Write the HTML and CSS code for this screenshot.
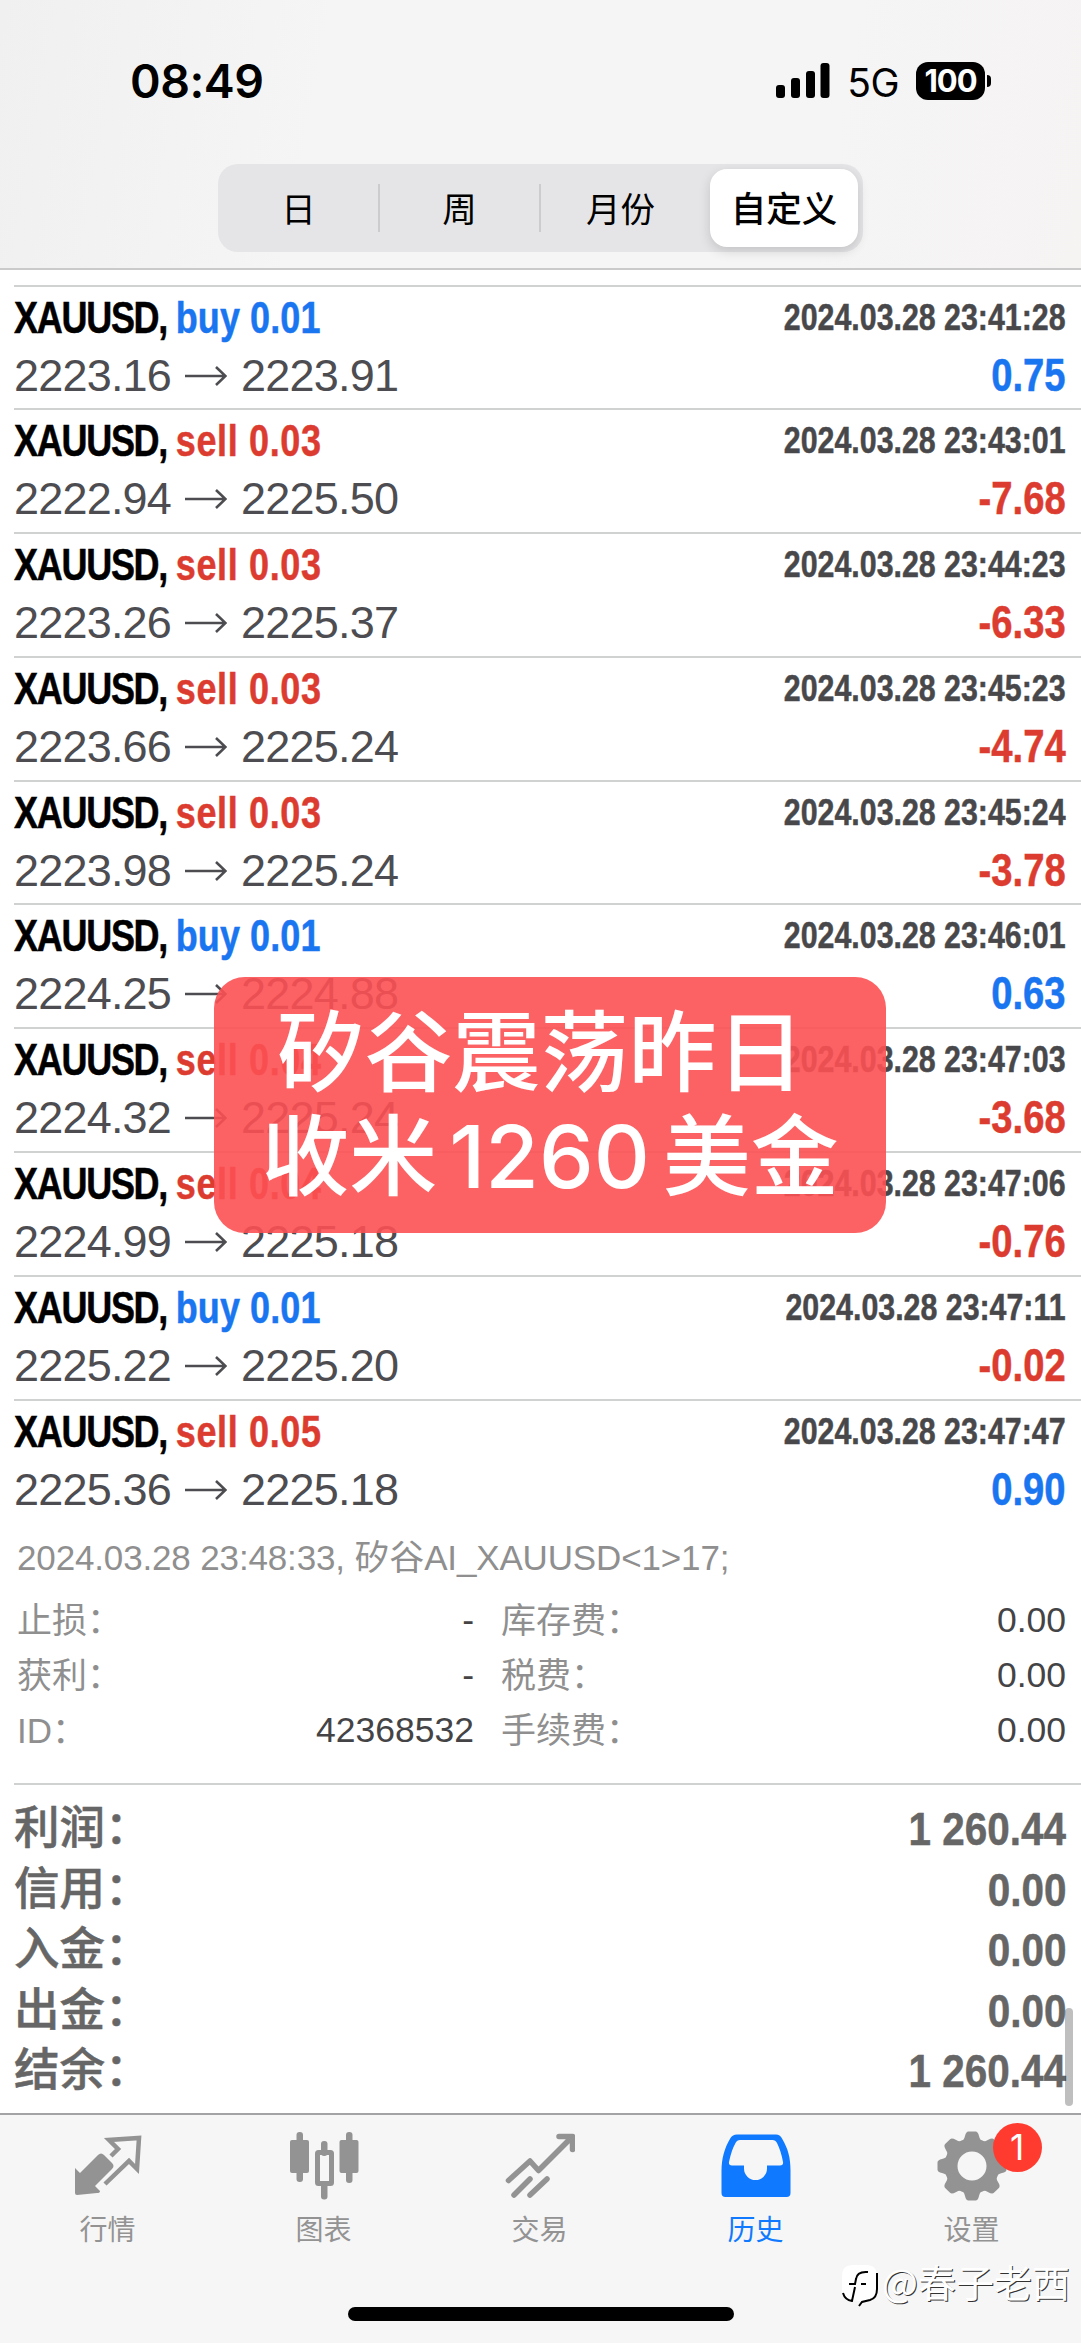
FILE: index.html
```html
<!DOCTYPE html>
<html lang="zh-CN">
  <head>
    <meta charset="utf-8">
    <title>历史</title>
    <link rel="stylesheet" href="styles.css">
  </head>
  <body>
    <div class="screen">
      <header class="header">
        <div class="status">
          <span class="time">08:49</span>
          <div class="status-right">
            <svg class="signal" width="54" height="35" viewBox="0 0 54 35">
              <rect x="0" y="22" width="9" height="13" rx="3"/>
              <rect x="15" y="15" width="9" height="20" rx="3"/>
              <rect x="30" y="8" width="9" height="27" rx="3"/>
              <rect x="44.5" y="0" width="9" height="35" rx="3"/>
            </svg>
            <span class="network">5G</span>
            <span class="battery">100</span>
            <span class="battery-tip"></span>
          </div>
        </div>
        <div class="segments">
          <span class="segment">日</span>
          <span class="segment line">周</span>
          <span class="segment line">月份</span>
          <span class="segment active">自定义</span>
        </div>
      </header>

      <main class="content">
        <div class="deals" id="deals"></div>

        <div class="details">
          <div class="comment">2024.03.28 23:48:33, 矽谷AI_XAUUSD&lt;1&gt;17;</div>
          <div class="detail-grid">
            <span>止损：</span><b>-</b><span>库存费：</span><b>0.00</b>
            <span>获利：</span><b>-</b><span>税费：</span><b>0.00</b>
            <span>ID：</span><b>42368532</b><span>手续费：</span><b>0.00</b>
          </div>
        </div>

        <div class="totals">
          <div class="total"><span>利润：</span><b>1 260.44</b></div>
          <div class="total"><span>信用：</span><b>0.00</b></div>
          <div class="total"><span>入金：</span><b>0.00</b></div>
          <div class="total"><span>出金：</span><b>0.00</b></div>
          <div class="total"><span>结余：</span><b>1 260.44</b></div>
        </div>
        <div class="scrollbar"></div>
      </main>

      <nav class="tabbar">
        <div class="tab">
          <svg width="70" height="70" viewBox="0 0 70 70">
            <path d="M2 37l5 5 18-18q3-3 6 0l8 8q3 3 0 6l-17 17 5 5q0 2-3 2L4 64q-2 0-2-2z" fill="currentColor"/>
            <path d="M38 25l7-7-9-9 30-2-2 31-8-8-24 23" fill="none" stroke="currentColor" stroke-width="4.5"/>
          </svg>
          <span>行情</span>
        </div>
        <div class="tab">
          <svg width="70" height="70" viewBox="0 0 70 70">
            <g fill="currentColor">
              <rect x="1" y="9" width="19" height="33" rx="2"/><rect x="7.5" y="1" width="6.5" height="50" rx="3"/>
              <rect x="50.5" y="9" width="19" height="33" rx="2"/><rect x="57" y="1" width="6.5" height="51" rx="3"/>
              <rect x="32" y="10" width="6.5" height="15" rx="3"/><rect x="32" y="50" width="6.5" height="18.5" rx="3"/>
            </g>
            <rect x="28.5" y="21.5" width="14" height="31" rx="1" fill="none" stroke="currentColor" stroke-width="5"/>
          </svg>
          <span>图表</span>
        </div>
        <div class="tab">
          <svg width="70" height="70" viewBox="0 0 70 70" fill="none" stroke="currentColor" stroke-width="5.5" stroke-linecap="round" stroke-linejoin="round">
            <path d="M3.5 49.5L25 30l8.500 9.500L67 6M54 5.500h13.500v13"/>
            <path d="M9 64l16-16M25 64l17-16"/>
          </svg>
          <span>交易</span>
        </div>
        <div class="tab current">
          <svg width="70" height="70" viewBox="0 0 70 70">
            <path fill-rule="evenodd" fill="currentColor" d="M16 3.500h39q4 0 6 4c6 10 8.500 19 8.500 32V62q0 4-4 4h-61q-4 0-4-4V40c0-13 3-23 9-33q2-3.500 6.500-3.500zM19 9q-3 0-4.500 3-4 7-6.500 19-.5 3.500 3 3.500h12v3a11.500 11.500 0 0 0 23 0v-3h13q3.500 0 3-3.500-2-11-6-19-1.500-3-4.500-3z"/>
          </svg>
          <span>历史</span>
        </div>
        <div class="tab">
          <div class="gear">
            <svg width="70" height="70" viewBox="0 0 70 70">
              <g fill="currentColor">
                <path fill-rule="evenodd" d="M35 7.500a27.500 27.500 0 1 0 0 55a27.500 27.500 0 1 0 0-55zM35 20.500a14.500 14.500 0 1 1 0 29a14.500 14.500 0 1 1 0-29z"/>
                <path id="tooth" d="M23 11q4-1 5-6 1-4.500 3.500-4.500h7q2.500 0 3.500 4.500 1 5 5 6l-5 6H28z"/>
                <use href="#tooth" transform="rotate(45 35 35)"/>
                <use href="#tooth" transform="rotate(90 35 35)"/>
                <use href="#tooth" transform="rotate(135 35 35)"/>
                <use href="#tooth" transform="rotate(180 35 35)"/>
                <use href="#tooth" transform="rotate(225 35 35)"/>
                <use href="#tooth" transform="rotate(270 35 35)"/>
                <use href="#tooth" transform="rotate(315 35 35)"/>
              </g>
            </svg>
            <span class="badge">1</span>
          </div>
          <span>设置</span>
        </div>
      </nav>

      <div class="banner">
        <div class="banner-title">矽谷震荡昨日</div>
        <div>收米<em>1260</em>美金</div>
      </div>

      <div class="watermark">
        <svg width="38" height="44" viewBox="0 0 38 44">
          <path d="M12 1h13q11 0 11 11v13q0 8-6 11l-12 6 1-5Q1 36 1 25V12Q1 1 12 1z" fill="#ffffff"/>
          <path d="M36 9v16q0 9-7 11l-8 2-3 4M2 29q2 7 9 8l3-14M27 8q-11-1-12 7l-1 5H8M20 20h5" fill="none" stroke="#000000" stroke-width="2"/>
        </svg>
        <span>@春子老西</span>
      </div>
      <div class="home-bar"></div>
    </div>

    <script>
      const deals = [
        ["buy", "0.01", "2223.16", "2223.91", "23:41:28", "0.75"],
        ["sell", "0.03", "2222.94", "2225.50", "23:43:01", "-7.68"],
        ["sell", "0.03", "2223.26", "2225.37", "23:44:23", "-6.33"],
        ["sell", "0.03", "2223.66", "2225.24", "23:45:23", "-4.74"],
        ["sell", "0.03", "2223.98", "2225.24", "23:45:24", "-3.78"],
        ["buy", "0.01", "2224.25", "2224.88", "23:46:01", "0.63"],
        ["sell", "0.04", "2224.32", "2225.24", "23:47:03", "-3.68"],
        ["sell", "0.04", "2224.99", "2225.18", "23:47:06", "-0.76"],
        ["buy", "0.01", "2225.22", "2225.20", "23:47:11", "-0.02"],
        ["sell", "0.05", "2225.36", "2225.18", "23:47:47", "0.90"]
      ];

      document.getElementById("deals").innerHTML = deals
        .map(([type, lots, open, close, time, profit]) => `
          <div class="deal">
            <div class="deal-row">
              <span class="symbol">XAUUSD, <span class="lots ${type}">${type} ${lots}</span></span>
              <span class="date">2024.03.28 ${time}</span>
            </div>
            <div class="deal-row">
              <span class="prices">${open}<svg class="arrow" width="42" height="22" viewBox="0 0 42 22"><path d="M0 11h40M31 2l9.500 9-9.500 9"/></svg>${close}</span>
              <span class="profit ${profit < 0 ? "sell" : "buy"}">${profit}</span>
            </div>
          </div>`)
        .join("");
    </script>
  </body>
</html>
```

FILE: styles.css
```css
* {
  box-sizing: border-box;
}

body {
  margin: 0;
  background: #ffffff;
  font-family: "Liberation Sans", "Noto Sans CJK SC", sans-serif;
}

.screen {
  position: relative;
  width: 1081px;
  height: 2343px;
  display: flex;
  flex-direction: column;
  overflow: hidden;
}

/* header */
.header {
  height: 270px;
  flex: none;
  background: linear-gradient(100deg, #f0f0f0, #f6f5f5 30%, #f5f5f6 75%, #f6f3f3);
  border-bottom: 2px solid #cbcacb;
}

.status {
  display: flex;
  justify-content: space-between;
  align-items: center;
  height: 164px;
  padding: 0 90px 3px 130px;
  font-family: Inter, sans-serif;
}

.time {
  font-size: 46.5px;
  font-weight: 600;
  letter-spacing: -0.5px;
}

.status-right {
  display: flex;
  align-items: center;
}

.network {
  margin: 3px 17px 0 17px;
  font-size: 39px;
  letter-spacing: -0.5px;
}

.battery {
  width: 69px;
  height: 38px;
  border-radius: 12px;
  background: #000000;
  color: #ffffff;
  font-size: 31px;
  font-weight: 700;
  line-height: 38px;
  text-align: center;
  letter-spacing: -1px;
}

.battery-tip {
  width: 4px;
  height: 12px;
  margin-left: 2px;
  border-radius: 0 4px 4px 0;
  background: #000000;
}

.segments {
  display: flex;
  width: 645px;
  height: 88px;
  margin-left: 218px;
  padding: 5px 5px 5px 0;
  border-radius: 20px;
  background: #e5e4e6;
}

.segment {
  position: relative;
  width: 161px;
  font-family: "Noto Sans CJK SC", sans-serif;
  font-size: 34.5px;
  line-height: 76px;
  text-align: center;
}

.segment.line::before {
  content: "";
  position: absolute;
  left: -1px;
  top: 15px;
  width: 2px;
  height: 48px;
  background: #cccccf;
}

.segment.active {
  width: 148px;
  margin-left: auto;
  border-radius: 17px;
  background: #ffffff;
  box-shadow: 0 4px 12px rgba(0, 0, 0, 0.15);
  font-size: 35.5px;
  font-weight: 500;
}

/* deals */
.content {
  position: relative;
  height: 1843px;
  flex: none;
  padding-top: 14.5px;
}

.deals {
  padding-left: 14px;
}

.deal {
  height: 123.8px;
  padding: 2px 15px 0 0;
  border-top: 2px solid #d0d2d2;
}

.deal-row {
  display: flex;
  justify-content: space-between;
  height: 58px;
  line-height: 58px;
  white-space: nowrap;
}

/* condensed bold face */
.symbol,
.date,
.profit,
.total b {
  font-weight: 700;
  transform: scaleX(0.82);
  transform-origin: right center;
  -webkit-text-stroke: 0.5px currentColor;
}

.symbol {
  font-size: 45px;
  letter-spacing: -1.6px;
  transform: scaleX(0.8);
  transform-origin: left center;
}

.lots {
  letter-spacing: 0.1px;
}

.lots.sell {
  letter-spacing: 0.8px;
}

.date {
  color: #48484b;
  font-size: 37px;
}

.prices {
  display: flex;
  align-items: center;
  color: #4d4d51;
  font-size: 45px;
  letter-spacing: -0.8px;
}

.arrow {
  margin: 0 14px 0 14px;
  fill: none;
  stroke: currentColor;
  stroke-width: 2.6;
}

.profit {
  font-size: 45.5px;
  transform: scaleX(0.84);
}

.buy {
  color: #1a75f0;
}

.sell {
  color: #dc3c30;
}

/* details */
.details {
  height: 261px;
  margin-left: 14px;
  padding: 11px 15px 0 3px;
  color: #8f8f8f;
  font-size: 35px;
}

.comment {
  height: 50px;
  line-height: 50px;
  letter-spacing: -0.15px;
}

.detail-grid {
  display: grid;
  grid-template-columns: 200px 257px 250px 1fr;
  grid-auto-rows: 55px;
  margin-top: 10px;
  line-height: 55px;
}

.detail-grid b {
  color: #444446;
  font-size: 35.5px;
  font-weight: 400;
  text-align: right;
}

.detail-grid span:nth-child(4n + 3) {
  padding-left: 27px;
}

/* totals */
.totals {
  margin-left: 14px;
  padding: 14px 15px 0 0;
  border-top: 2px solid #d0d2d2;
}

.total {
  display: flex;
  justify-content: space-between;
  height: 60.5px;
  line-height: 60px;
  color: #666666;
  font-size: 45.5px;
}

.total span {
  font-weight: 500;
  -webkit-text-stroke: 0.5px currentColor;
}

.total b {
  font-size: 47px;
  transform: scaleX(0.86);
}

.scrollbar {
  position: absolute;
  right: 8px;
  bottom: 7px;
  width: 8px;
  height: 98px;
  border-radius: 4px;
  background: rgba(0, 0, 0, 0.25);
}

/* tab bar */
.tabbar {
  display: flex;
  flex: 1;
  border-top: 2px solid #a3a3a5;
  background: #f6f6f6;
}

.tab {
  display: flex;
  flex-direction: column;
  align-items: center;
  width: 216px;
  padding: 16px 1px 0 0;
  color: #939393;
  font-family: "Noto Sans CJK SC", sans-serif;
  font-size: 28px;
  line-height: 40px;
}

.tab > span {
  margin-top: 7px;
}

.tab svg {
  display: block;
}

.current {
  color: #0f7aff;
}

.gear {
  position: relative;
}

.badge {
  position: absolute;
  left: 56px;
  top: -8px;
  width: 49px;
  height: 49px;
  border-radius: 50%;
  background: #ff3b30;
  color: #ffffff;
  font-family: Inter, sans-serif;
  font-size: 35px;
  line-height: 49px;
  text-align: center;
}

/* overlays */
.banner {
  position: absolute;
  left: 214px;
  top: 977px;
  width: 672px;
  height: 256px;
  padding-top: 17px;
  border-radius: 31px;
  background: rgba(252, 80, 83, 0.9);
  color: #ffffff;
  font-family: "Noto Sans CJK SC", sans-serif;
  font-size: 88px;
  font-weight: 500;
  line-height: 104px;
  text-align: center;
  white-space: nowrap;
}

.banner-title {
  padding-right: 19px;
}

.banner em {
  margin: 0 13px 0 12px;
  font-family: Inter, sans-serif;
  font-size: 87px;
  font-style: normal;
  font-weight: 500;
}

.watermark {
  position: absolute;
  left: 841px;
  top: 2254px;
  display: flex;
  align-items: center;
  gap: 3px;
  color: #ffffff;
  font-family: "Noto Sans CJK SC", sans-serif;
  font-size: 38px;
  line-height: 48px;
  text-shadow: 1px 1px 0 #333333;
  white-space: nowrap;
}

.watermark svg {
  margin-top: 10px;
}

.home-bar {
  position: absolute;
  left: 348px;
  top: 2307px;
  width: 386px;
  height: 14px;
  border-radius: 7px;
  background: #000000;
}
```
